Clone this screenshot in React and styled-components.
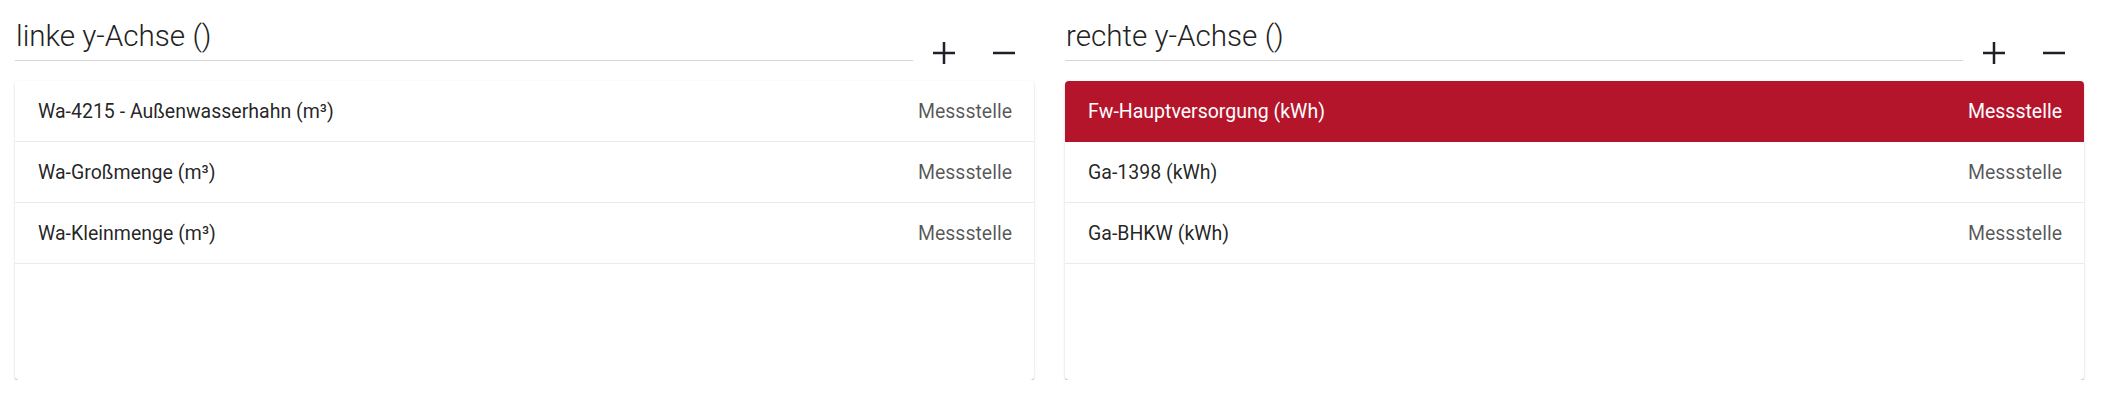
import styled, { createGlobalStyle } from "styled-components";

const GlobalStyle = createGlobalStyle`
  html, body {
    margin: 0;
    padding: 0;
    background: #fff;
  }
  body {
    font-family: Roboto, "Noto Sans", "Liberation Sans", sans-serif;
  }
`;

const axes = [
  {
    title: "linke y-Achse ()",
    items: [
      { name: "Wa-4215 - Außenwasserhahn (m³)", type: "Messstelle" },
      { name: "Wa-Großmenge (m³)", type: "Messstelle" },
      { name: "Wa-Kleinmenge (m³)", type: "Messstelle" },
    ],
  },
  {
    title: "rechte y-Achse ()",
    items: [
      { name: "Fw-Hauptversorgung (kWh)", type: "Messstelle", selected: true },
      { name: "Ga-1398 (kWh)", type: "Messstelle" },
      { name: "Ga-BHKW (kWh)", type: "Messstelle" },
    ],
  },
];

const PlusIcon = () => (
  <svg width="22" height="22" viewBox="0 0 22 22">
    <path d="M11 0v22M0 11h22" stroke="#1f1f28" strokeWidth="2.5" fill="none" />
  </svg>
);

const MinusIcon = () => (
  <svg width="22" height="22" viewBox="0 0 22 22">
    <path d="M0 11h22" stroke="#1f1f28" strokeWidth="2.5" fill="none" />
  </svg>
);

const AxisPanel = ({ title, items }) => {
  return (
    <Panel>
      <Header>
        <Title>{title}</Title>
        <IconButton aria-label="hinzufügen">
          <PlusIcon />
        </IconButton>
        <IconButton aria-label="entfernen">
          <MinusIcon />
        </IconButton>
      </Header>
      <Card>
        {items.map((item) => (
          <Row key={item.name} $selected={item.selected}>
            <span className="name">{item.name}</span>
            <span className="type">{item.type}</span>
          </Row>
        ))}
      </Card>
    </Panel>
  );
};

const App = () => {
  return (
    <>
      <GlobalStyle />
      <Page>
        {axes.map((axis) => (
          <AxisPanel key={axis.title} title={axis.title} items={axis.items} />
        ))}
      </Page>
    </>
  );
};

const Page = styled.div`
  display: grid;
  grid-template-columns: 1fr 1fr;
  column-gap: 31px;
  padding: 16px 18px 0 15px;
`;

const Panel = styled.div`
  display: flex;
  flex-direction: column;
`;

const Header = styled.div`
  display: flex;
  align-items: flex-end;
`;

const Title = styled.div`
  flex: 1;
  font-size: 29.6px;
  font-weight: 300;
  line-height: 40px;
  color: #222;
  padding: 0 0 4px 1px;
  border-bottom: 1px solid #d6d6d6;
  margin-right: 1px;
`;

const IconButton = styled.button`
  width: 60px;
  height: 32px;
  margin-bottom: -7.5px;
  padding: 0;
  border: none;
  background: transparent;
  display: flex;
  align-items: center;
  justify-content: center;
  cursor: pointer;
`;

const Card = styled.div`
  margin-top: 20px;
  height: 299px;
  background: #fff;
  border-radius: 4px;
  overflow: hidden;
  box-shadow: 0 2px 1px -1px rgba(0, 0, 0, 0.25), 0 1px 1px 0 rgba(0, 0, 0, 0.16),
    0 1px 3px 0 rgba(0, 0, 0, 0.12);
`;

const Row = styled.div`
  display: flex;
  align-items: center;
  justify-content: space-between;
  height: 60px;
  padding: 0 22px 0 23px;
  border-bottom: 1px solid #ebebeb;
  font-size: 19.5px;
  background: ${(p) => (p.$selected ? "#b5152b" : "#fff")};
  border-bottom-color: ${(p) => (p.$selected ? "#b5152b" : "#ebebeb")};

  & > .name {
    color: ${(p) => (p.$selected ? "#fff" : "rgba(0, 0, 0, 0.87)")};
  }

  & > .type {
    color: ${(p) => (p.$selected ? "#fff" : "rgba(0, 0, 0, 0.66)")};
  }
`;

export default App;
